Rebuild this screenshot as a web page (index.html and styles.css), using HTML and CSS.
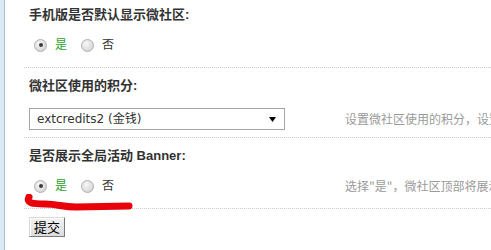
FILE: index.html
```html
<!DOCTYPE html>
<html>
<head>
<meta charset="utf-8">
<link rel="stylesheet" href="styles.css">
</head>
<body>
<div class="page">
  <div class="strip"></div>
  <div class="content">
    <div class="row first">
      <div class="title">手机版是否默认显示微社区:</div>
      <div class="line radios">
        <div class="opts">
          <span class="radio checked"></span><span class="lbl on">是</span>
          <span class="radio"></span><span class="lbl">否</span>
        </div>
      </div>
    </div>
    <div class="row">
      <div class="title">微社区使用的积分:</div>
      <div class="line sel">
        <div class="select"><span class="val">extcredits2 (金钱)</span><svg class="arrow" width="7" height="5" viewBox="0 0 7 5"><path d="M0 0H7L3.5 5Z" fill="#000"/></svg></div>
        <div class="desc">设置微社区使用的积分，设置后请勿轻易修改</div>
      </div>
    </div>
    <div class="row">
      <div class="title">是否展示全局活动 Banner:</div>
      <div class="line radios">
        <div class="opts">
          <span class="radio checked"></span><span class="lbl on">是</span>
          <span class="radio"></span><span class="lbl">否</span>
        </div>
        <div class="desc">选择"是"，微社区顶部将展示全局活动 Banner</div>
      </div>
    </div>
    <div class="submit-row">
      <button class="btn">提交</button>
    </div>
  </div>
  <svg class="scribble" width="140" height="20" viewBox="0 0 140 20">
    <path d="M29 3 C26 9 32 10 45 10 C58 10 62 13 76 13 L129 12" fill="none" stroke="#e8000a" stroke-width="7" stroke-linecap="round" stroke-linejoin="round"/>
  </svg>
</div>
</body>
</html>
```
FILE: styles.css
```css
html, body {
  margin: 0;
  padding: 0;
  background: #fff;
  overflow: hidden;
}
.page {
  position: relative;
  display: flex;
  width: 491px;
  height: 250px;
  overflow: hidden;
  font-family: "Liberation Sans", "Noto Sans CJK SC", sans-serif;
  color: #333;
}
.strip {
  width: 4px;
  flex: none;
  background: #dbe9f7;
  border-right: 1px solid #a9bed1;
}
.content {
  flex: 1;
  padding-left: 19px;
  min-width: 0;
}
.row {
  border-bottom: 1px dotted #c8c8c8;
  padding-top: 9px;
}
.row.first {
  padding-top: 6px;
}
.title {
  font-size: 13px;
  font-weight: bold;
  line-height: 18px;
  height: 18px;
  padding-left: 5px;
  color: #333;
  white-space: nowrap;
}
.line {
  display: grid;
  grid-template-columns: 316px auto;
  align-items: center;
  padding-left: 5px;
  white-space: nowrap;
}
.radios {
  height: 24px;
  margin-top: 9px;
  padding-bottom: 10px;
}
.sel {
  height: 22px;
  margin-top: 13px;
  padding-bottom: 7px;
}
.opts {
  display: flex;
  align-items: center;
  padding-left: 5px;
}
.radio {
  width: 11px;
  height: 11px;
  border-radius: 50%;
  border: 1px solid #b0b0b0;
  background: radial-gradient(circle at 40% 35%, #f7f7f7 0%, #e2e2e2 50%, #c8c8c8 100%);
  position: relative;
  flex: none;
}
.radio.checked::after {
  content: "";
  position: absolute;
  left: 3.5px;
  top: 3.5px;
  width: 4px;
  height: 4px;
  border-radius: 50%;
  background: #3c3c3c;
}
.lbl {
  font-size: 12px;
  line-height: 16px;
  margin-left: 8px;
  margin-right: 14px;
  color: #333;
}
.lbl.on {
  color: #2aa12a;
}
.select {
  height: 20px;
  border: 1px solid #a5a5a5;
  background: #fff;
  display: flex;
  align-items: center;
  justify-content: space-between;
  padding: 0 8px 0 7px;
  box-sizing: content-box;
  width: 239px;
}
.val {
  font-family: "DejaVu Sans", "Noto Sans CJK SC", sans-serif;
  font-size: 12px;
  color: #333;
  line-height: 16px;
}
.arrow {
  display: block;
}
.desc {
  font-size: 12px;
  color: #9a9a9a;
  font-family: "Noto Sans CJK SC", sans-serif;
  line-height: 16px;
}
.submit-row {
  padding: 8px 0 0 5px;
}
.btn {
  width: 36px;
  height: 20px;
  padding: 0;
  font-family: "Noto Sans CJK SC", sans-serif;
  font-size: 13px;
  line-height: 16px;
  color: #000;
  background: linear-gradient(#f2f2f2, #dcdcdc);
  border: 1px solid;
  border-color: #d8d8d8 #7a7a7a #7a7a7a #d8d8d8;
  box-shadow: inset 1px 1px 0 #fff;
  border-radius: 0;
}
.scribble {
  position: absolute;
  left: 0;
  top: 194px;
}
```
